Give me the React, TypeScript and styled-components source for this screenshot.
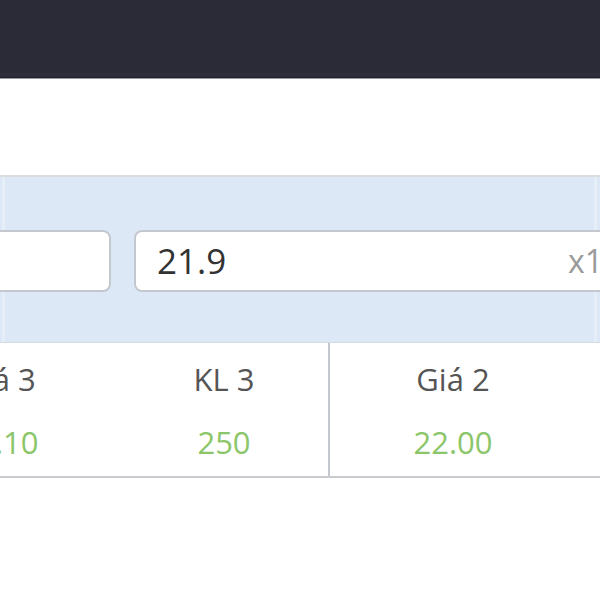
import React from 'react';
import styled, { createGlobalStyle } from 'styled-components';

const GlobalStyle = createGlobalStyle`
  html, body {
    margin: 0;
    padding: 0;
    background: #ffffff;
    overflow: hidden;
  }
  body {
    font-family: "Open Sans", "Noto Sans", sans-serif;
  }
`;

const columns = [
  { label: 'Giá 3', value: '22.10', width: 228, shift: 6 },
  { label: 'KL 3', value: '250', width: 218, shift: 10 },
  { label: 'Giá 2', value: '22.00', width: 248, shift: 0, divider: true },
  { label: 'KL 2', value: '500', width: 228, shift: 0 },
];

function App() {
  return (
    <Page>
      <GlobalStyle />
      <TopBar />
      <Spacer />
      <Panel>
        <InputRow>
          <Field $width={231} />
          <Field $width={560}>
            <FieldValue>21.9</FieldValue>
            <FieldUnit>x1000</FieldUnit>
          </Field>
        </InputRow>
      </Panel>
      <Table>
        {columns.map((col, idx) => (
          <Cell key={idx} $width={col.width} $shift={col.shift} $divider={col.divider}>
            <CellLabel>{col.label}</CellLabel>
            <CellValue>{col.value}</CellValue>
          </Cell>
        ))}
      </Table>
    </Page>
  );
}

export default App;

const Page = styled.div`
  width: 600px;
  height: 600px;
  overflow: hidden;
  background: #ffffff;
`;

const TopBar = styled.div`
  height: 77px;
  background: #2b2b37;
  border-bottom: 1px solid #1f1f28;
  box-shadow: 0 1px 0 #9c9cab, inset 0 -4px 0 #2f2f3b;
`;

const Spacer = styled.div`
  height: 97px;
`;

const Panel = styled.div`
  height: 165px;
  border-top: 2px solid #d9dde2;
  border-bottom: 1px solid #d3dae2;
  background: linear-gradient(
    to right,
    #dce8f6 0,
    #dce8f6 2px,
    #e6eef8 2px,
    #e6eef8 5px,
    #dce8f6 5px,
    #dce8f6 594px,
    #e6eef8 594px,
    #e6eef8 597px,
    #dce8f6 597px
  );
  display: flex;
  align-items: center;
`;

const InputRow = styled.div`
  display: flex;
  gap: 23px;
  margin-left: -120px;
  margin-top: 2px;
`;

const Field = styled.div<{ $width: number }>`
  flex: none;
  width: ${({ $width }) => $width}px;
  height: 62px;
  box-sizing: border-box;
  border: 2px solid #c3c8cf;
  border-radius: 8px;
  background: #ffffff;
  display: flex;
  align-items: center;
  justify-content: space-between;
  padding: 0 20px 0 21px;
`;

const FieldValue = styled.span`
  font-size: 35px;
  color: #333333;
`;

const FieldUnit = styled.span`
  font-size: 32px;
  color: #9a9a9a;
  margin-right: 14px;
`;

const Table = styled.div`
  display: flex;
  height: 133px;
  margin-left: -118px;
  border-bottom: 2px solid #c9cbcf;
`;

const Cell = styled.div<{ $width: number; $shift: number; $divider?: boolean }>`
  flex: none;
  width: ${({ $width }) => $width}px;
  box-sizing: border-box;
  padding-left: ${({ $shift }) => $shift}px;
  border-left: ${({ $divider }) => ($divider ? '2px solid #c3c8cf' : 'none')};
  display: flex;
  flex-direction: column;
  align-items: center;
  padding-top: 15px;
`;

const CellLabel = styled.div`
  font-size: 31px;
  line-height: 42px;
  color: #555555;
`;

const CellValue = styled.div`
  margin-top: 21px;
  font-size: 31px;
  line-height: 42px;
  color: #8cc66a;
`;
